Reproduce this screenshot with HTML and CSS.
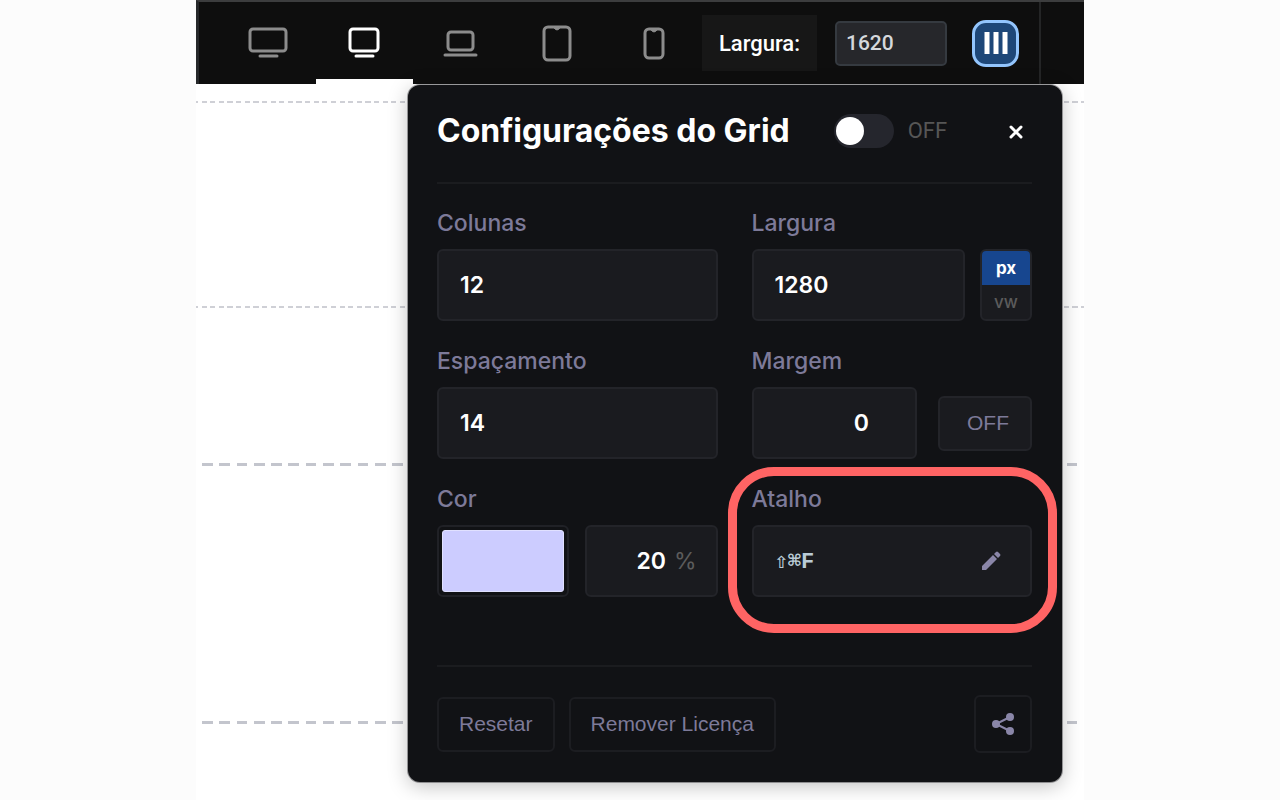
FILE: index.html
```html
<!DOCTYPE html>
<html lang="pt-BR">
<head>
  <meta charset="UTF-8">
  <meta name="viewport" content="width=device-width, initial-scale=1.0">
  <title>Configurações do Grid</title>
  <link rel="stylesheet" href="styles.css">
</head>
<body>

<main class="stage">
  <header class="toolbar">
    <nav class="devices" aria-label="Dispositivos">
      <button type="button" class="device" aria-label="Widescreen">
        <svg width="40" height="40" viewBox="0 0 40 40"><rect x="2" y="6" width="36" height="22" rx="3"/><path d="M12 33h17"/></svg>
      </button>
      <button type="button" class="device active" aria-label="Desktop">
        <svg width="40" height="40" viewBox="0 0 40 40"><rect x="5" y="6" width="28" height="22" rx="3"/><path d="M11 33h17"/></svg>
      </button>
      <button type="button" class="device" aria-label="Laptop">
        <svg width="40" height="40" viewBox="0 0 40 40"><rect x="7" y="9" width="25" height="18" rx="3"/><path d="M4 32h31"/></svg>
      </button>
      <button type="button" class="device" aria-label="Tablet">
        <svg width="40" height="40" viewBox="0 0 40 40"><rect x="7" y="4" width="26" height="33" rx="4"/><path class="notch" d="M15 4h10q-2 0-3 2q-2 2-4 0q-1-2-3-2z"/></svg>
      </button>
      <button type="button" class="device" aria-label="Celular">
        <svg width="40" height="40" viewBox="0 0 40 40"><rect x="11" y="6" width="18" height="29" rx="4"/><path class="notch" d="M15 6h10q-2 0-3 2q-2 2-4 0q-1-2-3-2z"/></svg>
      </button>
    </nav>
    <label class="width-label" for="viewport">Largura:</label>
    <input class="width-input" type="text" id="viewport" value="1620">
    <button type="button" class="grid-button" aria-label="Grid">
      <svg width="26" height="26" viewBox="0 0 26 26"><path d="M4 2v22M13 2v22M22 2v22"/></svg>
    </button>
    <div class="toolbar-end"></div>
  </header>

  <div class="canvas">
    <div class="line thin first"></div>
    <div class="line thin second"></div>
    <div class="line thick third"></div>
    <div class="line thick fourth"></div>
  </div>

  <form class="panel">
    <div class="panel-header">
      <h2>Configurações do Grid</h2>
      <input class="switch" type="checkbox" id="gridOn">
      <label class="switch-label" for="gridOn">OFF</label>
      <button type="button" class="close" aria-label="Fechar">
        <svg width="16" height="16" viewBox="0 0 16 16"><path d="M3 4l10 10M13 4L3 14"/></svg>
      </button>
    </div>

    <div class="fields">
      <div class="field">
        <label for="columns">Colunas</label>
        <input class="box" type="text" id="columns" value="12">
      </div>
      <div class="field">
        <label for="gridWidth">Largura</label>
        <div class="row">
          <input class="box" type="text" id="gridWidth" value="1280">
          <div class="units">
            <button type="button" class="unit selected">px</button>
            <button type="button" class="unit">vw</button>
          </div>
        </div>
      </div>
      <div class="field">
        <label for="gutter">Espaçamento</label>
        <input class="box" type="text" id="gutter" value="14">
      </div>
      <div class="field">
        <label for="margin">Margem</label>
        <div class="row margin-row">
          <input class="box" type="text" id="margin" value="0">
          <button type="button" class="outline filled">OFF</button>
        </div>
      </div>
      <div class="field">
        <label for="color">Cor</label>
        <div class="color-row">
          <input class="color" type="color" id="color" value="#ccccff">
          <div class="box opacity">
            <input type="text" id="opacity" value="20" aria-label="Opacidade">
            <label for="opacity">%</label>
          </div>
        </div>
      </div>
      <div class="field highlight">
        <label for="shortcut">Atalho</label>
        <div class="box shortcut">
          <input type="text" id="shortcut" value="⇧⌘F" readonly>
          <button type="button" aria-label="Editar atalho">
            <svg width="20" height="20" viewBox="0 0 20 20"><path d="M1 15L12 4l4 4L5 19H1zM13 3l2-2q1-1 2 0l2 2q1 1 0 2l-2 2z"/></svg>
          </button>
        </div>
      </div>
    </div>

    <div class="panel-footer">
      <button type="reset" class="outline">Resetar</button>
      <button type="button" class="outline">Remover Licença</button>
      <button type="button" class="outline share" aria-label="Compartilhar">
        <svg width="24" height="24" viewBox="0 0 24 24"><path d="M19 5L5 12l14 7"/><circle cx="5" cy="12" r="4"/><circle cx="19" cy="5" r="4"/><circle cx="19" cy="19" r="4"/></svg>
      </button>
    </div>
  </form>
</main>

</body>
</html>
```
FILE: styles.css
```css
* {
  box-sizing: border-box;
}

body {
  margin: 0;
  background-color: #fcfcfc;
  font-family: Inter, "Liberation Sans", sans-serif;
}

button,
input {
  margin: 0;
  padding: 0;
  border: none;
  background: none;
  font-family: inherit;
}

button {
  cursor: pointer;
}

svg {
  display: block;
}

.stage {
  position: relative;
  max-width: 888px;
  min-height: 100vh;
  margin: 0 auto;
  background-color: #fff;
}

/* Toolbar */
.toolbar {
  display: flex;
  align-items: center;
  height: 84px;
  padding-left: 21px;
  background-color: #0e0e0e;
  border-top: 2px solid #3c3d3e;
  border-left: 3px solid #26282a;
}

.devices {
  display: flex;
  flex: 1;
  align-self: stretch;
}

.device {
  display: flex;
  flex: 1;
  align-items: center;
  justify-content: center;
  padding-top: 4px;
  border-bottom: 5px solid transparent;
  color: #8c8c8c;
}

.device.active {
  color: #fff;
  border-bottom-color: #fff;
}

.device svg {
  fill: none;
  stroke: currentColor;
  stroke-width: 3;
  stroke-linecap: round;
}

.device .notch {
  fill: currentColor;
  stroke-width: 1;
}

.width-label {
  width: 115px;
  padding: 15px 0 13px;
  background-color: #171717;
  color: #fff;
  font-family: Roboto, sans-serif;
  font-size: 22px;
  font-weight: 500;
  line-height: 28px;
  text-align: center;
}

.width-input {
  width: 112px;
  height: 45px;
  margin: 0 25px 0 18px;
  padding: 0 9px;
  background-color: #26272b;
  border: 2px solid #353a40;
  border-radius: 5px;
  color: #d5d8dc;
  font-family: Roboto, sans-serif;
  font-size: 21px;
  font-weight: 500;
}

.grid-button {
  display: flex;
  align-items: center;
  justify-content: center;
  width: 47px;
  height: 47px;
  background-color: #1e4778;
  border: 3px solid #93c5fd;
  border-radius: 14px;
}

.grid-button path {
  stroke: #fff;
  stroke-width: 5;
}

.toolbar-end {
  align-self: stretch;
  width: 45px;
  margin-left: 20px;
  border-left: 2px solid #242526;
}

/* Page area */
.canvas {
  display: flex;
  flex-direction: column;
}

.line.thin {
  height: 2px;
  background-image: repeating-linear-gradient(90deg, #cfd0d6 0 calc(60% / 103), transparent calc(60% / 103) calc(100% / 103));
  background-position: -3px 0;
}

.line.thick {
  height: 3px;
  margin: 0 0 0 6px;
  background-image: repeating-linear-gradient(90deg, #c3c5cd 0 calc(62% / 51), transparent calc(62% / 51) calc(100% / 51));
}

.line.first {
  margin-top: 17px;
}

.line.second {
  margin-top: 203px;
}

.line.third {
  margin-top: 155px;
}

.line.fourth {
  margin-top: 255px;
}

/* Popover */
.panel {
  position: absolute;
  top: 85px;
  right: 22px;
  width: 654px;
  max-width: 100%;
  padding: 0 30px 0 29px;
  background-color: #111215;
  border-radius: 12px;
  box-shadow: 0 0 0 1px rgba(30, 31, 35, 0.4), 0 4px 20px rgba(0, 0, 0, 0.25);
}

.panel-header {
  display: flex;
  align-items: center;
  height: 99px;
  padding-bottom: 6px;
  border-bottom: 2px solid #1b1c1f;
}

.panel-header h2 {
  margin: 0 44px 0 0;
  color: #fff;
  font-size: 32px;
  font-weight: 700;
  white-space: nowrap;
}

.switch {
  appearance: none;
  display: flex;
  align-items: center;
  width: 60px;
  height: 34px;
  padding: 0 2px;
  background-color: #25262d;
  border-radius: 17px;
}

.switch::before {
  content: "";
  width: 28px;
  height: 28px;
  background-color: #fff;
  border-radius: 50%;
}

.switch:checked {
  justify-content: flex-end;
}

.switch-label {
  margin-left: 14px;
  color: #565656;
  font-family: Roboto, sans-serif;
  font-size: 22px;
}

.close {
  display: flex;
  align-items: center;
  justify-content: center;
  width: 32px;
  height: 32px;
  margin-left: auto;
}

.close path {
  stroke: #fff;
  stroke-width: 3;
  stroke-linecap: round;
}

.fields {
  display: grid;
  grid-template-columns: 1fr 1fr;
  gap: 26px 34px;
  padding: 25px 0 68px;
}

.field {
  display: flex;
  flex-direction: column;
  gap: 12px;
  min-width: 0;
}

.field > label {
  color: #7d7a99;
  font-size: 23px;
  font-weight: 500;
  line-height: 28px;
}

.row {
  display: flex;
  align-items: center;
  gap: 15px;
}

.box {
  flex: 1;
  width: 100%;
  min-width: 0;
  height: 72px;
  min-height: 72px;
  padding: 0 21px;
  background-color: #1a1b1f;
  border: 2px solid #232429;
  border-radius: 6px;
  color: #fff;
  font-size: 23px;
  font-weight: 600;
}

.units {
  display: flex;
  flex-direction: column;
  width: 52px;
  height: 72px;
  overflow: hidden;
  background-color: #1a1b1f;
  border: 2px solid #232429;
  border-radius: 6px;
}

.unit {
  flex: 1;
  color: #5c5c5c;
  font-size: 17px;
  font-weight: 500;
}

.unit.selected {
  background-color: #17468f;
  color: #fff;
  font-weight: 700;
}

.margin-row {
  gap: 21px;
}

.margin-row .box {
  padding-right: 46px;
  text-align: right;
}

.color-row {
  display: grid;
  grid-template-columns: 1fr 1fr;
  gap: 16px;
}

.color {
  width: 100%;
  height: 72px;
  padding: 3px;
  border: 2px solid #202126;
  border-radius: 6px;
}

.color::-webkit-color-swatch-wrapper {
  padding: 0;
}

.color::-webkit-color-swatch {
  border: 1px solid #e0e0ff;
  border-radius: 3px;
}

.opacity {
  display: flex;
  align-items: center;
  gap: 8px;
  padding: 0 19px;
}

.opacity input {
  flex: 1;
  min-width: 0;
  color: #fff;
  font-size: 23px;
  font-weight: 600;
  text-align: right;
}

.opacity label {
  color: #5c5c5c;
  font-weight: 400;
}

.shortcut {
  display: flex;
  align-items: center;
  padding-right: 29px;
}

.shortcut input {
  flex: 1;
  min-width: 0;
  color: #b9cbd6;
  font-family: "Liberation Mono", "DejaVu Sans Mono", monospace;
  font-size: 22px;
  font-weight: 700;
}

.shortcut svg {
  fill: #8a86a8;
}

.highlight {
  position: relative;
}

.highlight::after {
  content: "";
  position: absolute;
  inset: -18px -25px -36px -24px;
  border: 9px solid #ff6464;
  border-radius: 46px;
  pointer-events: none;
}

.panel-footer {
  display: flex;
  align-items: center;
  gap: 14px;
  padding: 28px 0 29px;
  border-top: 2px solid #1b1c1f;
}

.outline {
  height: 55px;
  padding: 0 20px;
  border: 2px solid #1c1d21;
  border-radius: 6px;
  color: #7d7a99;
  font-family: "Liberation Sans", Arial, sans-serif;
  font-size: 21px;
}

.outline.filled {
  width: 94px;
  padding: 0 20px 0 26px;
  background-color: #1a1b1f;
  border-color: #232429;
}

.outline.share {
  display: flex;
  align-items: center;
  justify-content: center;
  width: 58px;
  height: 58px;
  margin-left: auto;
  padding: 0;
}

.share svg {
  fill: #8a86a8;
}

.share path {
  fill: none;
  stroke: #8a86a8;
  stroke-width: 2;
}
```
